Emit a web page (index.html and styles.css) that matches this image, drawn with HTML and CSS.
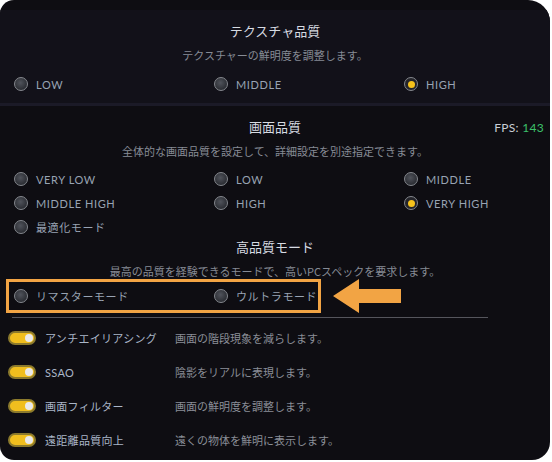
FILE: index.html
```html
<!DOCTYPE html>
<html lang="ja">
<head>
  <meta charset="UTF-8" />
  <title>グラフィック設定</title>
  <link rel="stylesheet" href="styles.css">
</head>
<body>
  <div class="panel">

    <!-- Texture quality -->
    <section class="block block-top">
      <h2 class="title">テクスチャ品質</h2>
      <p class="sub">テクスチャーの鮮明度を調整します。</p>
      <div class="radios">
        <label class="radio"><span class="dot"></span>LOW</label>
        <label class="radio"><span class="dot"></span>MIDDLE</label>
        <label class="radio on"><span class="dot"></span>HIGH</label>
      </div>
    </section>

    <!-- Screen quality -->
    <section class="block">
      <div class="title-row">
        <span></span>
        <h2 class="title">画面品質</h2>
        <div class="fps">FPS: <b>143</b></div>
      </div>
      <p class="sub">全体的な画面品質を設定して、詳細設定を別途指定できます。</p>
      <div class="radios grid3">
        <label class="radio"><span class="dot"></span>VERY LOW</label>
        <label class="radio"><span class="dot"></span>LOW</label>
        <label class="radio"><span class="dot"></span>MIDDLE</label>
        <label class="radio"><span class="dot"></span>MIDDLE HIGH</label>
        <label class="radio"><span class="dot"></span>HIGH</label>
        <label class="radio on"><span class="dot"></span>VERY HIGH</label>
        <label class="radio"><span class="dot"></span>最適化モード</label>
      </div>

      <h2 class="title title-hq">高品質モード</h2>
      <p class="sub">最高の品質を経験できるモードで、高いPCスペックを要求します。</p>

      <div class="hq-row">
        <div class="hq-box">
          <label class="radio"><span class="dot"></span>リマスターモード</label>
          <label class="radio"><span class="dot"></span>ウルトラモード</label>
        </div>
        <svg class="arrow" width="68" height="34" viewBox="0 0 68 34">
          <polygon points="0,17 26,0 26,10 68,10 68,24 26,24 26,34" fill="#f2a444"/>
        </svg>
      </div>
      <div class="rule"></div>

      <ul class="toggles">
        <li><span class="switch"></span><span class="name">アンチエイリアシング</span><span class="desc">画面の階段現象を減らします。</span></li>
        <li><span class="switch"></span><span class="name">SSAO</span><span class="desc">陰影をリアルに表現します。</span></li>
        <li><span class="switch"></span><span class="name">画面フィルター</span><span class="desc">画面の鮮明度を調整します。</span></li>
        <li><span class="switch"></span><span class="name">遠距離品質向上</span><span class="desc">遠くの物体を鮮明に表示します。</span></li>
      </ul>
    </section>

  </div>
</body>
</html>
```

FILE: styles.css
```css
html, body {
  margin: 0;
  padding: 0;
  background: #ffffff;
}

body {
  font-family: "Lato", "Noto Sans CJK JP", sans-serif;
  color: #a9b3c2;
}

.panel {
  width: 550px;
  height: 460px;
  background: #0e0d12;
  border-radius: 14px 22px 18px 14px;
  overflow: hidden;
}

.block {
  display: flow-root;
}

.block-top {
  margin-top: 10px;
  height: 93px;
  background: #121119;
  border-bottom: 3px solid #1b1a27;
}

.title {
  margin: 12px 0 0;
  font-family: "Noto Sans CJK JP", sans-serif;
  font-size: 13px;
  font-weight: 400;
  line-height: 18px;
  color: #d7dbe2;
  text-align: center;
}

.sub {
  margin: 7px 0 0;
  font-family: "Noto Sans CJK JP", sans-serif;
  font-size: 11px;
  line-height: 16px;
  color: #868b95;
  text-align: center;
}

.radios {
  display: grid;
  grid-template-columns: 200px 190px 1fr;
  row-gap: 8px;
  margin-top: 13px;
  padding-left: 14px;
}

.grid3 {
  margin-top: 12px;
}

.radio {
  display: flex;
  align-items: center;
  gap: 8px;
  height: 16px;
  font-size: 11px;
  letter-spacing: 0.6px;
  color: #98a3b3;
}

.dot {
  width: 12px;
  height: 12px;
  border-radius: 50%;
  border: 1.5px solid #85888e;
  background: radial-gradient(circle at 45% 40%, #50535b, #2c2e34 70%);
  display: flex;
  align-items: center;
  justify-content: center;
  flex-shrink: 0;
}

.radio.on .dot {
  background: #24242a;
}

.radio.on .dot::after {
  content: "";
  width: 7px;
  height: 7px;
  border-radius: 50%;
  background: #f6c21c;
}

.title-row {
  display: grid;
  grid-template-columns: 1fr auto 1fr;
  align-items: center;
  height: 18px;
  margin-top: 12px;
}

.title-row .title {
  margin: 0;
}

.fps {
  justify-self: end;
  padding-right: 6px;
  font-size: 12px;
  letter-spacing: 0.3px;
  color: #c9ced6;
}

.fps b {
  font-weight: 400;
  color: #3cc06a;
}

.title-hq {
  margin-top: 3px;
}

.hq-row {
  display: flex;
  align-items: center;
  margin-top: 0;
  padding-left: 6px;
}

.hq-box {
  box-sizing: border-box;
  display: grid;
  grid-template-columns: 200px 1fr;
  align-items: center;
  width: 315px;
  height: 34px;
  padding-left: 5px;
  border: 3px solid #f2a444;
}

.arrow {
  margin-left: 12px;
  display: block;
}

.rule {
  margin: 4px 0 0 12px;
  width: 476px;
  height: 1px;
  background: #55555c;
}

.toggles {
  list-style: none;
  margin: 10px 0 0;
  padding: 0 0 0 8px;
  display: grid;
  row-gap: 14px;
}

.toggles li {
  display: flex;
  align-items: center;
  height: 20px;
  font-size: 11px;
}

.switch {
  position: relative;
  width: 24px;
  height: 10px;
  border-radius: 7px;
  border: 2px solid #8c7a2c;
  background: #f0be1e;
  flex-shrink: 0;
}

.switch::after {
  content: "";
  position: absolute;
  right: 1px;
  top: 1px;
  width: 8px;
  height: 8px;
  border-radius: 50%;
  background: #e9e9ec;
}

.name {
  width: 130px;
  margin-left: 9px;
  letter-spacing: 0.3px;
  color: #aab6c8;
}

.desc {
  font-family: "Noto Sans CJK JP", sans-serif;
  color: #8a8e97;
}
```
